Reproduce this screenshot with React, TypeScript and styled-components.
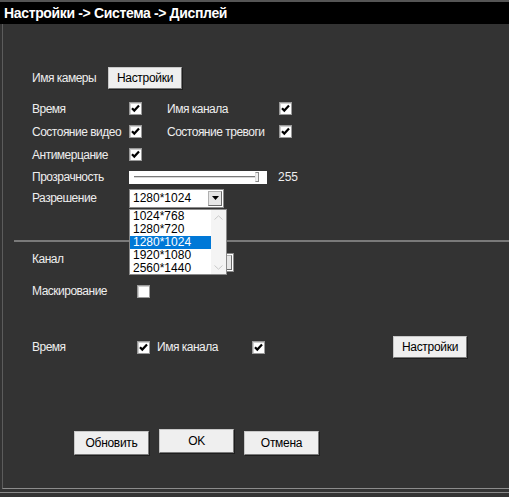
import styled, { createGlobalStyle } from "styled-components";

const GlobalStyle = createGlobalStyle`
  html, body {
    margin: 0;
    padding: 0;
    background: #333333;
  }
  body {
    font-family: "Liberation Sans", Arial, sans-serif;
  }
`;

const resolutions = ["1024*768", "1280*720", "1280*1024", "1920*1080", "2560*1440"];

const CheckBox = ({ checked }: { checked: boolean }) => (
  <Box>
    {checked && (
      <svg width="9" height="9" viewBox="0 0 9 9">
        <path d="M1 4.2 L3.3 6.6 L8 1.6" stroke="#000" strokeWidth="2.2" fill="none" />
      </svg>
    )}
  </Box>
);

export default function App() {
  return (
    <>
      <GlobalStyle />
      <Page>
        <TitleBar>Настройки -&gt; Система -&gt; Дисплей</TitleBar>
        <Body>
          <Section>
            <Row $height={22}>
              <Label $width={76}>Имя камеры</Label>
              <Button>Настройки</Button>
            </Row>
            <Row $height={23} $top={8}>
              <Label $width={97}>Время</Label>
              <CheckBox checked />
              <Label $width={112} $left={25}>Имя канала</Label>
              <CheckBox checked />
            </Row>
            <Row $height={23}>
              <Label $width={97}>Состояние видео</Label>
              <CheckBox checked />
              <Label $width={112} $left={25}>Состояние тревоги</Label>
              <CheckBox checked />
            </Row>
            <Row $height={23}>
              <Label $width={97}>Антимерцание</Label>
              <CheckBox checked />
            </Row>
            <Row $height={22}>
              <Label $width={97}>Прозрачность</Label>
              <Slider>
                <Track />
                <Thumb />
              </Slider>
              <Value>255</Value>
            </Row>
            <Row $height={20}>
              <Label $width={97}>Разрешение</Label>
              <SelectWrap>
                <Select $width={95}>
                  <SelectText>1280*1024</SelectText>
                  <Arrow>
                    <svg width="7" height="4" viewBox="0 0 7 4">
                      <path d="M0 0 H7 L3.5 4 Z" fill="#000" />
                    </svg>
                  </Arrow>
                </Select>
                <DropList>
                  <Items>
                    {resolutions.map((r) => (
                      <Item key={r} $selected={r === "1280*1024"}>
                        {r}
                      </Item>
                    ))}
                  </Items>
                  <ScrollBar>
                    <svg width="9" height="5" viewBox="0 0 9 5">
                      <path d="M0.5 4.5 L4.5 0.8 L8.5 4.5" stroke="#c8c8c8" fill="none" />
                    </svg>
                    <svg width="9" height="5" viewBox="0 0 9 5">
                      <path d="M0.5 0.5 L4.5 4.2 L8.5 0.5" stroke="#c8c8c8" fill="none" />
                    </svg>
                  </ScrollBar>
                </DropList>
              </SelectWrap>
            </Row>
          </Section>

          <Divider />

          <Section>
            <Row $height={20} $top={10}>
              <Label $width={97} $raise={3}>Канал</Label>
              <Select $width={105}>
                <SelectText />
                <Arrow />
              </Select>
            </Row>
            <Row $height={22} $top={8}>
              <Label $width={105}>Маскирование</Label>
              <CheckBox checked={false} />
            </Row>
            <Row $height={22} $top={34}>
              <Label $width={105}>Время</Label>
              <CheckBox checked />
              <Label $width={95} $left={7}>Имя канала</Label>
              <CheckBox checked />
              <Button $left={128}>Настройки</Button>
            </Row>
          </Section>

          <Footer>
            <Button $wide $low>Обновить</Button>
            <Button $wide>OK</Button>
            <Button $wide $low>Отмена</Button>
          </Footer>
        </Body>
        <BottomEdge />
      </Page>
    </>
  );
}

const Page = styled.div`
  width: 509px;
  height: 497px;
  background: #333333;
  display: flex;
  flex-direction: column;
  overflow: hidden;
`;

const TitleBar = styled.div`
  height: 22px;
  border-top: 2px solid #555555;
  background: #000000;
  color: #ffffff;
  font-weight: bold;
  font-size: 14px;
  line-height: 22px;
  padding-left: 4px;
  letter-spacing: -0.35px;
`;

const Body = styled.div`
  height: 464px;
  margin-left: 2px;
  border-left: 1px solid #5c5c5c;
  border-bottom: 1px solid #8c8c8c;
  padding-left: 29px;
  display: flex;
  flex-direction: column;
`;

const Section = styled.div`
  display: flex;
  flex-direction: column;
  &:first-child {
    padding-top: 43px;
  }
`;

const Row = styled.div<{ $height: number; $top?: number }>`
  display: flex;
  align-items: center;
  height: ${(p) => p.$height}px;
  margin-top: ${(p) => p.$top ?? 0}px;
`;

const Label = styled.span<{ $width: number; $left?: number; $raise?: number }>`
  width: ${(p) => p.$width}px;
  margin-left: ${(p) => p.$left ?? 0}px;
  margin-bottom: ${(p) => (p.$raise ?? 0) * 2}px;
  flex-shrink: 0;
  color: #eeeeee;
  font-size: 12px;
  letter-spacing: -0.5px;
  white-space: nowrap;
`;

const Box = styled.span`
  width: 11px;
  height: 11px;
  flex-shrink: 0;
  background: #ffffff;
  border: 1px solid #9a9a9a;
  box-shadow: inset 1px 1px 0 #d0d0d0;
  display: flex;
  align-items: center;
  justify-content: center;
`;

const Button = styled.button<{ $left?: number; $wide?: boolean; $low?: boolean }>`
  width: ${(p) => (p.$wide ? 75 : 74)}px;
  height: ${(p) => (p.$wide ? 24 : 22)}px;
  margin-left: ${(p) => p.$left ?? 0}px;
  margin-top: ${(p) => (p.$low ? 2 : 0)}px;
  padding: 0;
  background: #efefef;
  border: 1px solid #c8c8c8;
  border-right-color: #7a7a7a;
  border-bottom-color: #7a7a7a;
  box-shadow: 1px 1px 0 #1e1e1e;
  font-family: "Liberation Sans", Arial, sans-serif;
  font-size: 12px;
  letter-spacing: -0.3px;
  color: #000000;
  flex-shrink: 0;
`;

const Slider = styled.div`
  width: 138px;
  height: 13px;
  background: #ffffff;
  display: flex;
  align-items: center;
  padding-left: 5px;
  box-sizing: border-box;
`;

const Track = styled.div`
  width: 124px;
  height: 1px;
  background: #7a7a7a;
  border-bottom: 1px solid #d8d8d8;
`;

const Thumb = styled.div`
  width: 2px;
  height: 8px;
  border: 1px solid #8a8a8a;
  border-left-color: #e0e0e0;
  background: #f0f0f0;
  margin-left: -3px;
`;

const Value = styled.span`
  color: #eeeeee;
  font-size: 12px;
  margin-left: 11px;
`;

const SelectWrap = styled.div`
  position: relative;
`;

const Select = styled.div<{ $width: number }>`
  width: ${(p) => p.$width}px;
  height: 19px;
  box-sizing: border-box;
  background: #ffffff;
  border: 1px solid #8a8a8a;
  display: flex;
  align-items: center;
  padding: 1px;
`;

const SelectText = styled.span`
  flex: 1;
  font-size: 12px;
  color: #000000;
  padding-left: 2px;
`;

const Arrow = styled.span`
  width: 14px;
  height: 15px;
  box-sizing: border-box;
  background: #e6e6e6;
  border: 1px solid #b0b0b0;
  border-right-color: #6a6a6a;
  border-bottom-color: #6a6a6a;
  display: flex;
  align-items: center;
  justify-content: center;
`;

const DropList = styled.div`
  position: absolute;
  top: 20px;
  left: 0;
  z-index: 5;
  width: 98px;
  height: 66px;
  box-sizing: border-box;
  background: #ffffff;
  border: 1px solid #8a8a8a;
  display: flex;
`;

const Items = styled.div`
  width: 81px;
  display: flex;
  flex-direction: column;
`;

const Item = styled.div<{ $selected?: boolean }>`
  height: 13px;
  line-height: 13px;
  font-size: 12px;
  padding-left: 3px;
  background: ${(p) => (p.$selected ? "#0078d7" : "transparent")};
  color: ${(p) => (p.$selected ? "#ffffff" : "#000000")};
`;

const ScrollBar = styled.div`
  flex: 1;
  background: #f4f4f4;
  display: flex;
  flex-direction: column;
  justify-content: space-between;
  align-items: center;
  padding: 5px 0 4px;
`;

const Divider = styled.div`
  height: 2px;
  margin-top: 32px;
  margin-left: -18px;
  background: #7a7a7a;
`;

const Footer = styled.div`
  display: flex;
  align-items: flex-start;
  gap: 10px;
  margin-top: 71px;
  padding-left: 42px;
`;

const BottomEdge = styled.div`
  height: 3px;
  border-bottom: 1px solid #8a8a8a;
  background: #333333;
  flex-shrink: 0;
`;
